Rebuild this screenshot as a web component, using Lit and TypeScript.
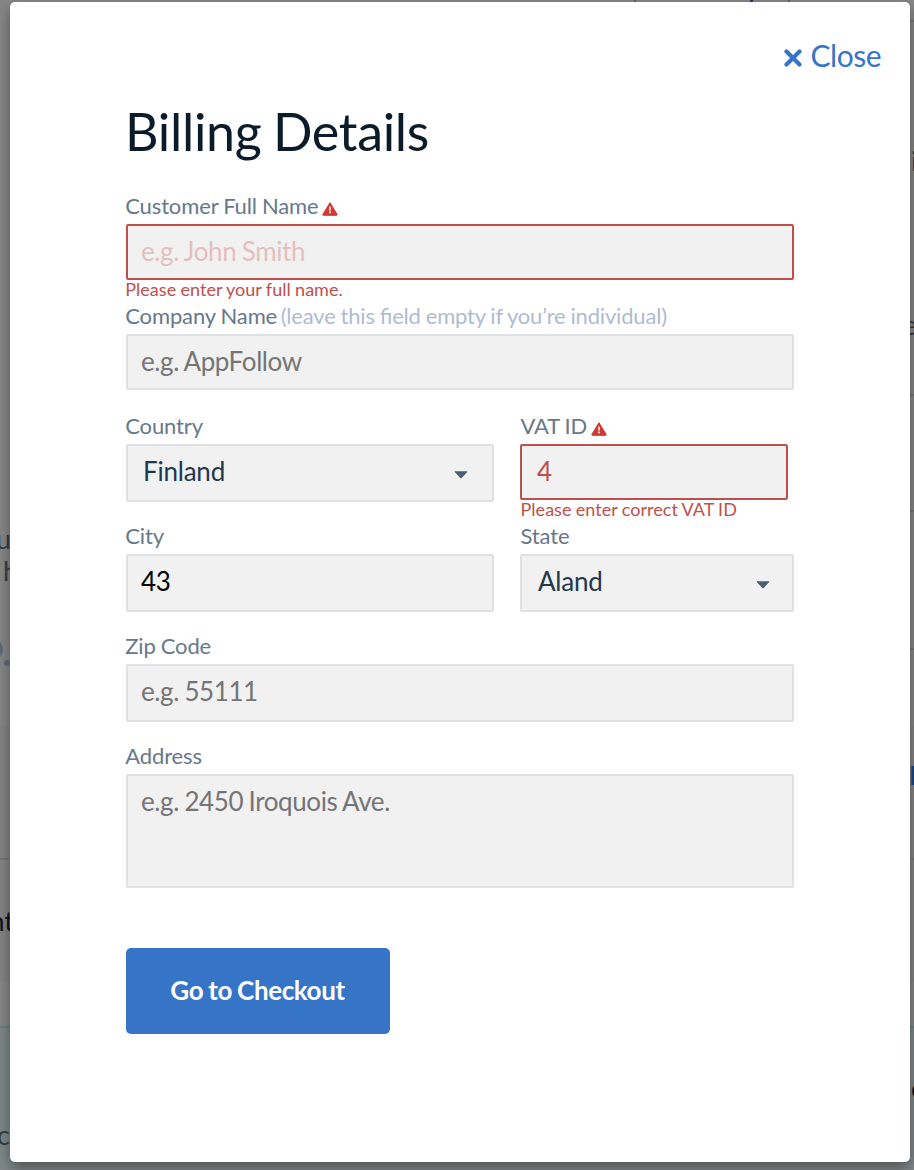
import { LitElement, html, css, svg, nothing } from "lit";
import { customElement, property } from "lit/decorators.js";

const warning = html`<svg class="warn" viewBox="0 0 16 14" width="16" height="14" aria-hidden="true">
  ${svg`<path d="M8 .7 15.1 12.3Q15.5 13.3 14.5 13.3H1.5Q.5 13.3.9 12.3Z" fill="#cf3a33" stroke="#cf3a33" stroke-linejoin="round"/><path d="M7.1 4.7h1.8l-.3 4H7.4zM7.2 9.6h1.6v1.7H7.2z" fill="#fff"/>`}
</svg>`;

@customElement("form-field")
export class FormField extends LitElement {
  @property() label = "";
  @property() hint = "";
  @property() error = "";
  @property() kind = "input";
  @property() value = "";
  @property() placeholder = "";

  static styles = css`
    :host { display: block; height: 110px; }
    * { box-sizing: border-box; }
    .label { height: 30px; line-height: 24px; font-size: 22px; color: #66788a; white-space: nowrap; display: flex;
      letter-spacing: -0.12px; word-spacing: -0.5px; font-feature-settings: "liga" 1; margin-left: var(--label-shift, -0.8px); }
    .label .hint { color: #b0bbd0; margin-left: 3.5px; letter-spacing: -0.18px; }
    .warn { display: block; margin: 8px 0 0 3.4px; }
    .control { display: block; width: 100%; height: var(--control-height, 58px); margin: 0; outline: 0; border: 2px solid #dee2e6;
      border-radius: 2px; background: #f1f1f1; padding: 0 13px var(--control-drop, 4px); font: inherit; font-size: 26px; line-height: 32px; color: #000;
      resize: none; letter-spacing: -0.4px; word-spacing: -0.8px; }
    .control::placeholder { color: #757575; opacity: 1; }
    .area { height: 114px; padding: 9px 13px; overflow: hidden; }
    .select { display: flex; justify-content: space-between; padding: 9px var(--arrow-inset, 24px) 9px var(--select-inset, 15px); color: #22384d; letter-spacing: -0.22px; }
    .select .arrow { margin-top: 16px; }
    .invalid { height: 56px; padding: 0 var(--invalid-inset, 13px) 2px; border-color: #be4f4c; color: #be4f4c; }
    .invalid::placeholder { color: #e4bfbf; }
    .error { font-size: 18px; line-height: 18px; color: #be4f4c; white-space: nowrap; letter-spacing: 0.04px; word-spacing: -0.4px; margin-left: var(--label-shift, -0.8px); }
  `;

  control() {
    if (this.kind === "select")
      return html`<div class="control select" role="combobox"><span>${this.value}</span>
        <svg class="arrow" width="14" height="8" viewBox="0 0 14 8">${svg`<path d="M1 .3H13Q13.8 .4 13 1.2L7.7 7Q7 7.7 6.3 7L1 1.2Q.2 .4 1 .3Z" fill="#4b5f73"/>`}</svg></div>`;
    if (this.kind === "area")
      return html`<textarea class="control area" placeholder=${this.placeholder}></textarea>`;
    return html`<input class="control ${this.error ? "invalid" : ""}" .value=${this.value} placeholder=${this.placeholder} />`;
  }

  render() {
    return html`<div class="label"><span>${this.label}</span>${this.hint ? html`<span class="hint">${this.hint}</span>` : nothing}${this.error ? warning : nothing}</div>
      ${this.control()}
      ${this.error ? html`<div class="error">${this.error}</div>` : nothing}`;
  }
}

@customElement("page-backdrop")
export class PageBackdrop extends LitElement {
  static styles = css`
    :host { position: absolute; inset: 0; overflow: hidden; background: #888; color: #343e48; font-size: 27px; line-height: 32px; }
    .bit, .rule, .tint { position: absolute; }
    .rule { height: 2px; background: #73777d; }
    .tick { position: absolute; top: 0; width: 2px; height: 3px; background: #62656d; }
    .left { left: 0; width: 12px; }
    .right { right: 0; width: 8px; }
    .teal { background: #648383; }
    .tint { left: 0; right: 0; top: 1028px; bottom: 0; background: #808888; }
    .band { position: absolute; left: 0; right: 0; top: 726px; height: 256px; background: #858585; }
    .dark { color: #0c1520; }
    .blue { color: #1c4789; font-weight: 700; }
    .muted { color: #626a78; }
    .t20 { top: 20px; } .t394 { top: 394px; } .t510 { top: 510px; } .t648 { top: 648px; } .t858 { top: 858px; } .t1026 { top: 1026px; }
    .k1 { left: 634px; } .k2 { left: 788px; }
    .k3 { left: 750px; width: 3px; background: #243d70; }
    .u { right: 903px; top: 523px; } .h { left: 3px; top: 555px; }
    .p { right: 910px; top: 624px; font-size: 36px; line-height: 42px; font-weight: 700; }
    .nt { right: 900px; top: 905px; } .c { left: -3px; top: 1119px; }
    .i { left: 911px; top: 145px; } .e { left: 903px; top: 309px; }
    .pp { left: 909px; top: 759px; } .cc { left: 911px; top: 1072px; }
    .dot { left: 4px; top: 660px; width: 6px; height: 6px; border-radius: 50%; background: #626a78; position: absolute; }
  `;
  render() {
    return html`<div class="band"></div><div class="tint"></div>
      <i class="tick k1"></i><i class="tick k3"></i><i class="tick k2"></i>
      <i class="rule right t20"></i><i class="rule right t394"></i>
      <i class="rule right t510"></i><i class="rule right t648"></i>
      <i class="rule left t858"></i><i class="rule right t858"></i>
      <i class="rule teal left t1026"></i><i class="rule teal right t1026"></i>
      <span class="bit u">u</span><span class="bit h">h</span><span class="bit p muted">o</span><i class="dot"></i>
      <span class="bit nt dark">nt</span><span class="bit c">c</span>
      <span class="bit i">i</span><span class="bit e">e</span><span class="bit pp blue">P</span><span class="bit cc dark">c</span>`;
  }
}

@customElement("app-root")
export class AppRoot extends LitElement {
  static styles = css`
    :host { display: block; position: relative; width: 914px; height: 1170px; overflow: hidden; font-family: Lato, sans-serif; }
    * { box-sizing: border-box; }
    .modal { position: relative; width: 900px; height: 1160px; margin: 0 0 0 10px; background: #fff; border-radius: 5px;
      box-shadow: 0 6px 16px rgba(0, 0, 0, .4); padding: 35px 29px 0 116px; }
    .frame { padding-top: 2px; }
    .close { display: flex; justify-content: flex-end; align-items: center; height: 36px; font-size: 30px; line-height: 36px; color: #3674c7; letter-spacing: -0.5px; }
    .close svg { margin: 5px 9px 0 0; }
    h1 { margin: 26px 0 0 -1px; height: 95px; font-size: 52px; line-height: 64px; font-weight: 400; color: #0c1b2a; white-space: nowrap;
      letter-spacing: -0.3px; word-spacing: -1.6px; }
    .form { width: 668px; }
    .company { --control-height: 56px; --control-drop: 2px; }
    .pair { display: grid; grid-template-columns: 368px 274px; column-gap: 26px; }
    .vat { width: 268px; --invalid-inset: 15px; --label-shift: 0.5px; }
    .state { --arrow-inset: 22px; --select-inset: 16px; --label-shift: 0.5px; }
    .submit { display: flex; align-items: center; justify-content: center; width: 264px; height: 86px; margin-top: 94px; padding: 0 1px 2px 0;
      border: 0; border-radius: 5px; background: #3674c7; color: #fff; font: 700 26px/32px Lato, sans-serif; letter-spacing: -0.4px; word-spacing: -0.8px; }
  `;
  render() {
    return html`<page-backdrop></page-backdrop>
      <div class="frame"><div class="modal" role="dialog">
        <div class="close"><svg width="18" height="18" viewBox="0 0 18 18">${svg`<path d="M2.5 2.5 15.5 15.5M15.5 2.5 2.5 15.5" stroke="#3674c7" stroke-width="4.2" stroke-linecap="round"/>`}</svg><span>Close</span></div>
        <h1>Billing Details</h1>
        <div class="form">
          <form-field label="Customer Full Name" placeholder="e.g. John Smith" error="Please enter your full name."></form-field>
          <form-field class="company" label="Company Name" hint="(leave this field empty if you’re individual)" placeholder="e.g. AppFollow"></form-field>
          <div class="pair">
            <form-field label="Country" kind="select" value="Finland"></form-field>
            <form-field class="vat" label="VAT ID" value="4" error="Please enter correct VAT ID"></form-field>
            <form-field label="City" value="43"></form-field>
            <form-field class="state" label="State" kind="select" value="Aland"></form-field>
          </div>
          <form-field label="Zip Code" placeholder="e.g. 55111"></form-field>
          <form-field label="Address" kind="area" placeholder="e.g. 2450 Iroquois Ave."></form-field>
        </div>
        <button class="submit">Go to Checkout</button>
      </div></div>`;
  }
}
